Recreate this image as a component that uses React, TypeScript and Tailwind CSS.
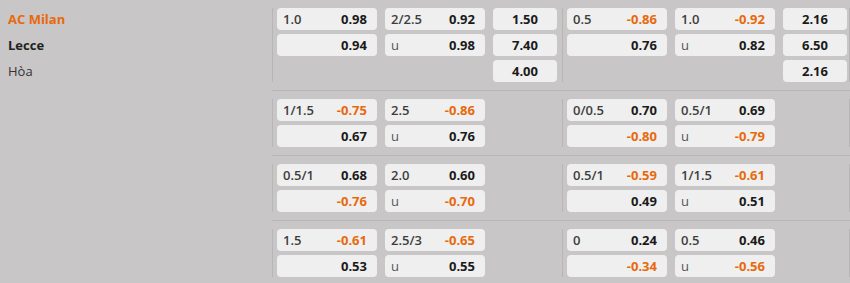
import React from "react";

type Cell = { label?: string; value: string; neg?: boolean; u?: boolean };
type Group = { ah: [Cell, Cell]; ou: [Cell, Cell]; x12?: [string, string, string] };
type Section = { full: Group; half: Group };

const sections: Section[] = [
  {
    full: {
      ah: [{ label: "1.0", value: "0.98" }, { value: "0.94" }],
      ou: [{ label: "2/2.5", value: "0.92" }, { label: "u", value: "0.98", u: true }],
      x12: ["1.50", "7.40", "4.00"],
    },
    half: {
      ah: [{ label: "0.5", value: "-0.86", neg: true }, { value: "0.76" }],
      ou: [{ label: "1.0", value: "-0.92", neg: true }, { label: "u", value: "0.82", u: true }],
      x12: ["2.16", "6.50", "2.16"],
    },
  },
  {
    full: {
      ah: [{ label: "1/1.5", value: "-0.75", neg: true }, { value: "0.67" }],
      ou: [{ label: "2.5", value: "-0.86", neg: true }, { label: "u", value: "0.76", u: true }],
    },
    half: {
      ah: [{ label: "0/0.5", value: "0.70" }, { value: "-0.80", neg: true }],
      ou: [{ label: "0.5/1", value: "0.69" }, { label: "u", value: "-0.79", neg: true, u: true }],
    },
  },
  {
    full: {
      ah: [{ label: "0.5/1", value: "0.68" }, { value: "-0.76", neg: true }],
      ou: [{ label: "2.0", value: "0.60" }, { label: "u", value: "-0.70", neg: true, u: true }],
    },
    half: {
      ah: [{ label: "0.5/1", value: "-0.59", neg: true }, { value: "0.49" }],
      ou: [{ label: "1/1.5", value: "-0.61", neg: true }, { label: "u", value: "0.51", u: true }],
    },
  },
  {
    full: {
      ah: [{ label: "1.5", value: "-0.61", neg: true }, { value: "0.53" }],
      ou: [{ label: "2.5/3", value: "-0.65", neg: true }, { label: "u", value: "0.55", u: true }],
    },
    half: {
      ah: [{ label: "0", value: "0.24" }, { value: "-0.34", neg: true }],
      ou: [{ label: "0.5", value: "0.46" }, { label: "u", value: "-0.56", neg: true, u: true }],
    },
  },
];

const OddCell = ({ c }: { c: Cell }) => (
  <div className="flex h-[22px] w-[100px] items-center justify-between rounded-[4px] bg-[#efefef] pl-[6px] pr-[10px]">
    <span className={c.u ? "font-normal text-[#555]" : "font-semibold text-[#3d3d3d]"}>{c.label}</span>
    <span className={`font-bold ${c.neg ? "text-[#e8690c]" : "text-[#1a1a1a]"}`}>{c.value}</span>
  </div>
);

const GroupCol = ({ g, w }: { g: Group; w: string }) => (
  <div className={`flex ${w} gap-[8px] border-l border-[#b7b5b5] pl-[4px]`}>
    <div className="flex flex-col gap-[4px]">
      <OddCell c={g.ah[0]} />
      <OddCell c={g.ah[1]} />
    </div>
    <div className="flex flex-col gap-[4px]">
      <OddCell c={g.ou[0]} />
      <OddCell c={g.ou[1]} />
    </div>
    {g.x12 && (
      <div className="flex flex-col gap-[4px]">
        {g.x12.map((v, i) => (
          <div key={i} className="flex h-[22px] w-[64px] items-center justify-center rounded-[4px] bg-[#efefef] font-bold text-[#1a1a1a]">
            {v}
          </div>
        ))}
      </div>
    )}
  </div>
);

export default function App() {
  return (
    <div
      className="flex h-[283px] w-[850px] overflow-hidden bg-[#c8c6c6] text-[13px] leading-none"
      style={{ fontFamily: '"Open Sans", "Noto Sans", sans-serif' }}
    >
      <div className="flex w-[272px] shrink-0 flex-col gap-[4px] pl-[8px] pt-[8px]">
        <div className="flex h-[22px] items-center font-bold text-[#e8690c]">AC Milan</div>
        <div className="flex h-[22px] items-center font-bold text-[#222]">Lecce</div>
        <div className="flex h-[22px] items-center text-[#333]">Hòa</div>
      </div>
      <div className="flex flex-col">
        {sections.map((s, i) => (
          <div key={i} className="flex border-b border-[#b7b5b5] pb-[8px] pt-[8px]">
            <GroupCol g={s.full} w="w-[290px]" />
            <div className="border-r border-[#b7b5b5]">
              <GroupCol g={s.half} w="w-[287px]" />
            </div>
          </div>
        ))}
      </div>
    </div>
  );
}
